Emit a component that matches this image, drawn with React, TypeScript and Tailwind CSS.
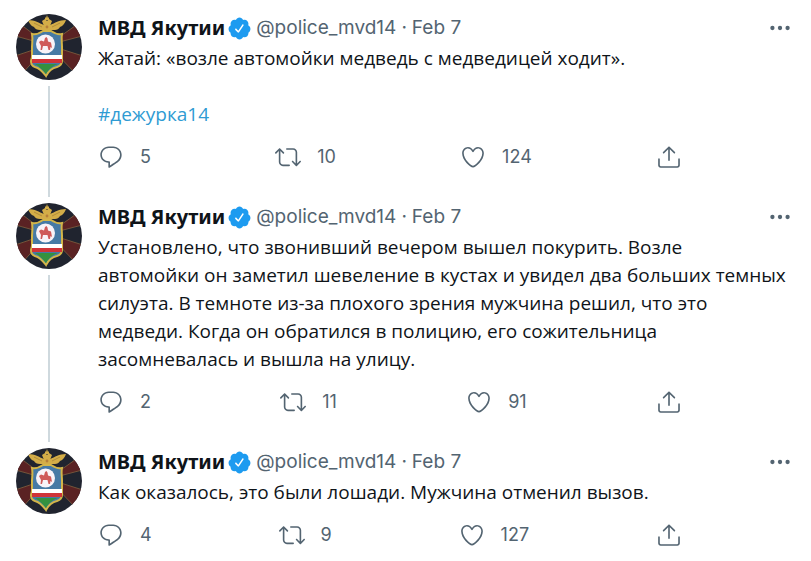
import type { ReactNode } from "react";

type Post = {
  id: string;
  body: ReactNode;
  replies: number;
  retweets: number;
  likes: number;
};

const posts: Post[] = [
  {
    id: "first",
    body: (
      <>
        <p>Жатай: «возле автомойки медведь с медведицей ходит».</p>
        <p className="mt-7">
          <a href="#tag" className="text-[#2f9bd3]">#дежурка14</a>
        </p>
      </>
    ),
    replies: 5,
    retweets: 10,
    likes: 124,
  },
  {
    id: "second",
    body: (
      <p>
        Установлено, что звонивший вечером вышел покурить. Возле
        <br />
        автомойки он заметил шевеление в кустах и увидел два больших темных
        <br />
        силуэта. В темноте из-за плохого зрения мужчина решил, что это
        <br />
        медведи. Когда он обратился в полицию, его сожительница
        <br />
        засомневалась и вышла на улицу.
      </p>
    ),
    replies: 2,
    retweets: 11,
    likes: 91,
  },
  {
    id: "third",
    body: <p>Как оказалось, это были лошади. Мужчина отменил вызов.</p>,
    replies: 4,
    retweets: 9,
    likes: 127,
  },
];

const iconPaths = {
  reply:
    "M14.046 2.242l-4.148-.01h-.002c-4.374 0-7.8 3.427-7.8 7.802 0 4.098 3.186 7.206 7.465 7.37v3.828c0 .108.044.286.12.403.142.225.384.347.632.347.138 0 .277-.038.402-.118.264-.168 6.473-4.14 8.088-5.506 1.902-1.61 3.04-3.97 3.043-6.312v-.017c-.006-4.367-3.43-7.787-7.8-7.788zm3.787 12.972c-1.134.96-4.862 3.405-6.772 4.643V16.67c0-.414-.335-.75-.75-.75h-.396c-3.66 0-6.318-2.476-6.318-5.886 0-3.534 2.768-6.302 6.3-6.302l4.147.01h.002c3.532 0 6.3 2.766 6.302 6.296-.003 1.91-.942 3.844-2.514 5.176z",
  retweet:
    "M23.77 15.67c-.292-.293-.767-.293-1.06 0l-2.22 2.22V7.65c0-2.068-1.683-3.75-3.75-3.75h-5.85c-.414 0-.75.336-.75.75s.336.75.75.75h5.85c1.24 0 2.25 1.01 2.25 2.25v10.24l-2.22-2.22c-.293-.293-.768-.293-1.06 0s-.294.768 0 1.06l3.5 3.5c.145.147.337.22.53.22s.383-.072.53-.22l3.5-3.5c.294-.292.294-.767 0-1.06zm-10.66 3.28H7.26c-1.24 0-2.25-1.01-2.25-2.25V6.46l2.22 2.22c.148.147.34.22.532.22s.384-.073.53-.22c.293-.293.293-.768 0-1.06l-3.5-3.5c-.293-.294-.768-.294-1.06 0l-3.5 3.5c-.294.292-.294.767 0 1.06s.767.293 1.06 0l2.22-2.22V16.7c0 2.068 1.683 3.75 3.75 3.75h5.85c.414 0 .75-.336.75-.75s-.337-.75-.75-.75z",
  like:
    "M12 21.638h-.014C9.403 21.59 1.95 14.856 1.95 8.478c0-3.064 2.525-5.754 5.403-5.754 2.29 0 3.83 1.58 4.646 2.73.814-1.148 2.354-2.73 4.645-2.73 2.88 0 5.404 2.69 5.404 5.755 0 6.376-7.454 13.11-10.037 13.157H12zM7.354 4.225c-2.08 0-3.903 1.988-3.903 4.255 0 5.74 7.034 11.596 8.55 11.658 1.518-.062 8.55-5.917 8.55-11.658 0-2.267-1.823-4.255-3.903-4.255-2.528 0-3.94 2.936-3.952 2.965-.23.562-1.156.562-1.387 0-.014-.03-1.425-2.965-3.954-2.965z",
  share:
    "M17.53 7.47l-5-5c-.293-.293-.768-.293-1.06 0l-5 5c-.294.293-.294.768 0 1.06s.767.294 1.06 0l3.72-3.72V15c0 .414.336.75.75.75s.75-.336.75-.75V4.81l3.72 3.72c.146.147.338.22.53.22s.384-.072.53-.22c.293-.293.293-.767 0-1.06zM19.708 21.944H4.292C3.028 21.944 2 20.916 2 19.652V14c0-.414.336-.75.75-.75s.75.336.75.75v5.652c0 .437.355.792.792.792h15.416c.437 0 .792-.355.792-.792V14c0-.414.336-.75.75-.75s.75.336.75.75v5.652c0 1.264-1.028 2.292-2.292 2.292z",
};

function Action({ icon, label, count }: { icon: keyof typeof iconPaths; label: string; count?: number }) {
  return (
    <button type="button" aria-label={label} className="flex h-7 items-center gap-4">
      <svg viewBox="0 0 24 24" className="size-[26px] fill-[#536471]" aria-hidden="true">
        <path d={iconPaths[icon]} />
      </svg>
      {count !== undefined && <span>{count}</span>}
    </button>
  );
}

function VerifiedBadge() {
  return (
    <svg viewBox="0 0 24 24" className="size-[25px] shrink-0" role="img" aria-label="Verified">
      <circle cx="12" cy="12" r="7" fill="#fff" />
      <path
        fill="#1d9bf0"
        d="M22.5 12.5c0-1.58-.875-2.95-2.148-3.6.154-.435.238-.905.238-1.4 0-2.21-1.71-3.998-3.818-3.998-.47 0-.92.084-1.336.25C14.818 2.415 13.51 1.5 12 1.5s-2.816.917-3.437 2.25c-.415-.165-.866-.25-1.336-.25-2.11 0-3.818 1.79-3.818 4 0 .494.083.964.237 1.4-1.272.65-2.147 2.018-2.147 3.6 0 1.495.782 2.798 1.942 3.486-.02.17-.032.34-.032.514 0 2.21 1.708 4 3.818 4 .47 0 .92-.086 1.335-.25.62 1.334 1.926 2.25 3.437 2.25 1.512 0 2.818-.916 3.437-2.25.415.163.865.248 1.336.248 2.11 0 3.818-1.79 3.818-4 0-.174-.012-.344-.033-.513 1.158-.687 1.943-1.99 1.943-3.484zm-6.616-3.334l-4.334 6.5c-.145.217-.382.334-.625.334-.143 0-.288-.04-.416-.126l-.115-.094-2.415-2.415c-.293-.293-.293-.768 0-1.06s.768-.294 1.06 0l1.77 1.767 3.825-5.74c.23-.345.696-.436 1.04-.207.346.23.44.696.21 1.04z"
      />
    </svg>
  );
}

function Avatar() {
  return (
    <svg viewBox="0 0 66 66" className="size-[66px] shrink-0 rounded-full" role="img" aria-label="МВД Якутии">
      <rect width="66" height="66" fill="#20242f" />
      {/* maroon rays edged in bronze */}
      <g fill="#5a2223" stroke="#74543a" strokeWidth="1">
        <path d="M32 31L-4 21L0 7Z" />
        <path d="M32 31L70 21L66 7Z" />
        <path d="M32 31L-4 43L4 62Z" />
        <path d="M32 31L70 43L62 62Z" />
      </g>
      {/* double-headed eagle */}
      <g fill="#d3ad48">
        <path d="M28 11C23 9 19 6 12 6C13 9 15 12 18 13C19 15 21 16 24 16L27 16L26 19H36L35 16L39 16C41 16 43 15 44 13C47 12 49 9 50 6C43 6 39 9 34 11Z" />
        <path d="M26 7L29 5L31 7L33 5L36 7L34 12H28Z" />
        <path d="M29 3L30 4L31 1L32 4L33 3L33 6H29Z" />
      </g>
      <path d="M18 9L26 13M44 9L36 13" stroke="#9a7730" strokeWidth="0.6" />
      <circle cx="31" cy="13" r="1.4" fill="#b5803a" />
      {/* shield */}
      <path
        d="M16 20C20 21 24 19 27 17H35C38 19 42 21 46 20C45 24 46 28 46 33V47C46 50 44 52 41 53C36 54 32 58 30 62C27 58 23 54 19 53C16 52 15 50 15 47L16 43V34C16 29 17 25 16 20Z"
        fill="#467aa5"
        stroke="#d2b549"
        strokeWidth="2"
      />
      <path d="M16 41H46V45H16Z" fill="#fff" />
      <path d="M16 45H46V49H16Z" fill="#cf3338" />
      <path d="M19 50H42C36 52 32 56 30 60C27 56 24 53 19 50Z" fill="#35913f" />
      <circle cx="29.5" cy="30" r="9.5" fill="#f8f3f8" />
      {/* horse and rider */}
      <path
        d="M23 28L25 26.5L28 27.5L29 24L30.5 23L31.5 24.5L32 27.5L35 28.5L36 34L34.5 33L34 36H32.5L31.5 32L27 32L26 36H24.5L25 32L24 30Z"
        fill="#cf5a5a"
      />
    </svg>
  );
}

function PostItem({ post, threaded }: { post: Post; threaded: boolean }) {
  return (
    <article className="flex gap-4">
      <div className="flex flex-col items-center">
        <Avatar />
        {threaded && <div className="my-1.5 w-0.5 grow bg-[#cfd9de]" />}
      </div>
      <div className={threaded ? "min-w-0 grow pb-8" : "min-w-0 grow"}>
        <header className="flex h-7 items-center font-['Inter',sans-serif] text-[19px] leading-7 text-[#536471]">
          <a href="#profile" className="flex items-center gap-0.5">
            <span className="font-['Noto_Sans',sans-serif] text-xl font-bold text-[#0f1419]">МВД Якутии</span>
            <VerifiedBadge />
          </a>
          <span className="ml-1">@police_mvd14</span>
          <span className="mx-[5px]">·</span>
          <time dateTime="02-07">Feb 7</time>
          <button type="button" aria-label="More" className="ml-auto">
            <svg viewBox="0 0 24 24" className="size-[26px] fill-[#536471]" aria-hidden="true">
              <circle cx="5" cy="12" r="2" />
              <circle cx="12" cy="12" r="2" />
              <circle cx="19" cy="12" r="2" />
            </svg>
          </button>
        </header>
        <div className="mt-0.5 font-['Open_Sans',sans-serif] text-[19px] leading-7 text-[#0f1419]">{post.body}</div>
        <div className="mt-[15px] flex max-w-[584px] justify-between font-['Inter',sans-serif] text-lg text-[#536471]">
          <Action icon="reply" label="Reply" count={post.replies} />
          <Action icon="retweet" label="Retweet" count={post.retweets} />
          <Action icon="like" label="Like" count={post.likes} />
          <Action icon="share" label="Share" />
        </div>
      </div>
    </article>
  );
}

export default function App() {
  return (
    <main className="min-h-screen bg-white pt-3.5 pr-[18px] pl-4 font-['Noto_Sans',sans-serif]">
      {posts.map((post, i) => (
        <PostItem key={post.id} post={post} threaded={i < posts.length - 1} />
      ))}
    </main>
  );
}
